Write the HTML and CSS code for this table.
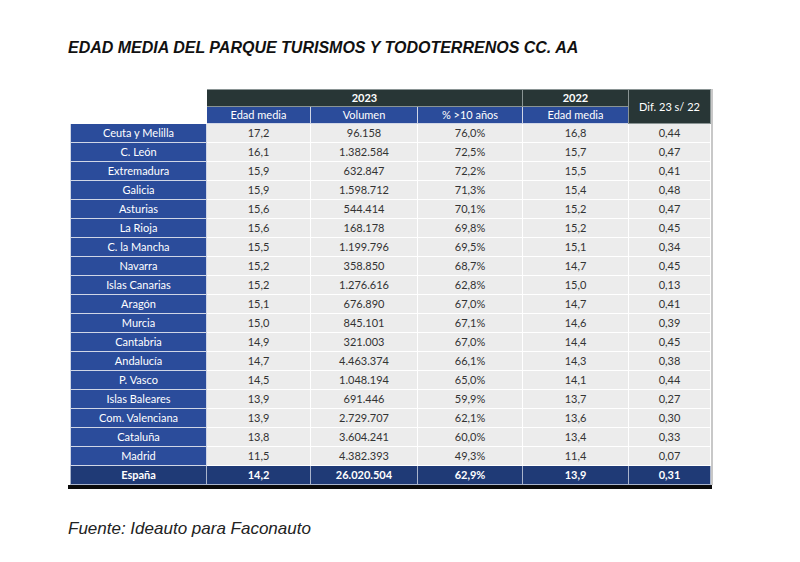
FILE: index.html
```html
<!DOCTYPE html>
<html lang="es">
<head>
<meta charset="utf-8">
<link rel="stylesheet" href="styles.css">
</head>
<body>
<div class="page">
  <h1 class="title">EDAD MEDIA DEL PARQUE TURISMOS Y TODOTERRENOS CC. AA</h1>
  <div class="table-wrap">
    <table class="data">
      <colgroup>
        <col class="c-label"><col class="c-edad"><col class="c-vol"><col class="c-pct"><col class="c-edad22"><col class="c-dif">
      </colgroup>
      <thead>
        <tr class="hrow1">
          <th class="blank"></th>
          <th class="dark" colspan="3">2023</th>
          <th class="dark">2022</th>
          <th class="dark dif" rowspan="2">Dif. 23 s/ 22</th>
        </tr>
        <tr class="hrow2">
          <th class="blank"></th>
          <th class="blue">Edad media</th>
          <th class="blue">Volumen</th>
          <th class="blue">% &gt;10 años</th>
          <th class="blue">Edad media</th>
        </tr>
      </thead>
      <tbody>
        <tr><th>Ceuta y Melilla</th><td>17,2</td><td>96.158</td><td>76,0%</td><td>16,8</td><td>0,44</td></tr>
        <tr><th>C. León</th><td>16,1</td><td>1.382.584</td><td>72,5%</td><td>15,7</td><td>0,47</td></tr>
        <tr><th>Extremadura</th><td>15,9</td><td>632.847</td><td>72,2%</td><td>15,5</td><td>0,41</td></tr>
        <tr><th>Galicia</th><td>15,9</td><td>1.598.712</td><td>71,3%</td><td>15,4</td><td>0,48</td></tr>
        <tr><th>Asturias</th><td>15,6</td><td>544.414</td><td>70,1%</td><td>15,2</td><td>0,47</td></tr>
        <tr><th>La Rioja</th><td>15,6</td><td>168.178</td><td>69,8%</td><td>15,2</td><td>0,45</td></tr>
        <tr><th>C. la Mancha</th><td>15,5</td><td>1.199.796</td><td>69,5%</td><td>15,1</td><td>0,34</td></tr>
        <tr><th>Navarra</th><td>15,2</td><td>358.850</td><td>68,7%</td><td>14,7</td><td>0,45</td></tr>
        <tr><th>Islas Canarias</th><td>15,2</td><td>1.276.616</td><td>62,8%</td><td>15,0</td><td>0,13</td></tr>
        <tr><th>Aragón</th><td>15,1</td><td>676.890</td><td>67,0%</td><td>14,7</td><td>0,41</td></tr>
        <tr><th>Murcia</th><td>15,0</td><td>845.101</td><td>67,1%</td><td>14,6</td><td>0,39</td></tr>
        <tr><th>Cantabria</th><td>14,9</td><td>321.003</td><td>67,0%</td><td>14,4</td><td>0,45</td></tr>
        <tr><th>Andalucía</th><td>14,7</td><td>4.463.374</td><td>66,1%</td><td>14,3</td><td>0,38</td></tr>
        <tr><th>P. Vasco</th><td>14,5</td><td>1.048.194</td><td>65,0%</td><td>14,1</td><td>0,44</td></tr>
        <tr><th>Islas Baleares</th><td>13,9</td><td>691.446</td><td>59,9%</td><td>13,7</td><td>0,27</td></tr>
        <tr><th>Com. Valenciana</th><td>13,9</td><td>2.729.707</td><td>62,1%</td><td>13,6</td><td>0,30</td></tr>
        <tr><th>Cataluña</th><td>13,8</td><td>3.604.241</td><td>60,0%</td><td>13,4</td><td>0,33</td></tr>
        <tr><th>Madrid</th><td>11,5</td><td>4.382.393</td><td>49,3%</td><td>11,4</td><td>0,07</td></tr>
        <tr class="total"><th>España</th><td>14,2</td><td>26.020.504</td><td>62,9%</td><td>13,9</td><td>0,31</td></tr>
      </tbody>
    </table>
    <div class="rule"></div>
  </div>
  <p class="source">Fuente: Ideauto para Faconauto</p>
</div>
</body>
</html>
```

FILE: styles.css
```css
html, body {
  margin: 0;
  padding: 0;
  background: #ffffff;
}

.page {
  padding: 39px 0 0 68px;
}

.title {
  margin: 0;
  font-family: "Liberation Sans", Arial, sans-serif;
  font-size: 16px;
  line-height: 18px;
  font-weight: bold;
  font-style: italic;
  color: #111111;
}

.table-wrap {
  margin-top: 32px;
  width: 644px;
}

.data {
  margin-left: 2px;
  border-collapse: collapse;
  table-layout: fixed;
  width: 640px;
  font-family: Lato, "Open Sans", sans-serif;
  font-size: 11px;
  box-shadow: 2px 0 0 #c8c8c8;
}

.c-label { width: 136px; }
.c-edad { width: 104px; }
.c-vol { width: 107px; }
.c-pct { width: 105px; }
.c-edad22 { width: 106px; }
.c-dif { width: 82px; }

.data th,
.data td {
  border: 1px solid #ffffff;
  padding: 0;
  text-align: center;
  font-weight: normal;
  line-height: 16px;
}

.hrow1 th { height: 16px; }
.hrow2 th { height: 16px; }

.data th.blank {
  background: #ffffff;
  border-color: #ffffff;
}

.data th.dark {
  background: #283636;
  color: #ffffff;
  font-weight: bold;
  border-color: #8a9494;
}

.data th.dif {
  font-weight: normal;
}

.data th.blue {
  background: #2b4c9b;
  color: #ffffff;
  border-color: #d0d6e6;
}

.data tbody th {
  background: #2b4c9b;
  color: #ffffff;
  height: 18px;
  border-color: #d0d6e6;
}

.data tbody td {
  background: #ececec;
  color: #333333;
  height: 18px;
}

.data tbody tr.total th,
.data tbody tr.total td {
  background: #1f3a76;
  color: #ffffff;
  font-weight: bold;
  border-color: #a9b4cc;
}

.rule {
  height: 4px;
  background: #0a0a0a;
}

.source {
  margin: 30px 0 0 0;
  font-family: "Liberation Sans", Arial, sans-serif;
  font-size: 17px;
  line-height: 20px;
  font-style: italic;
  color: #222222;
}
```
